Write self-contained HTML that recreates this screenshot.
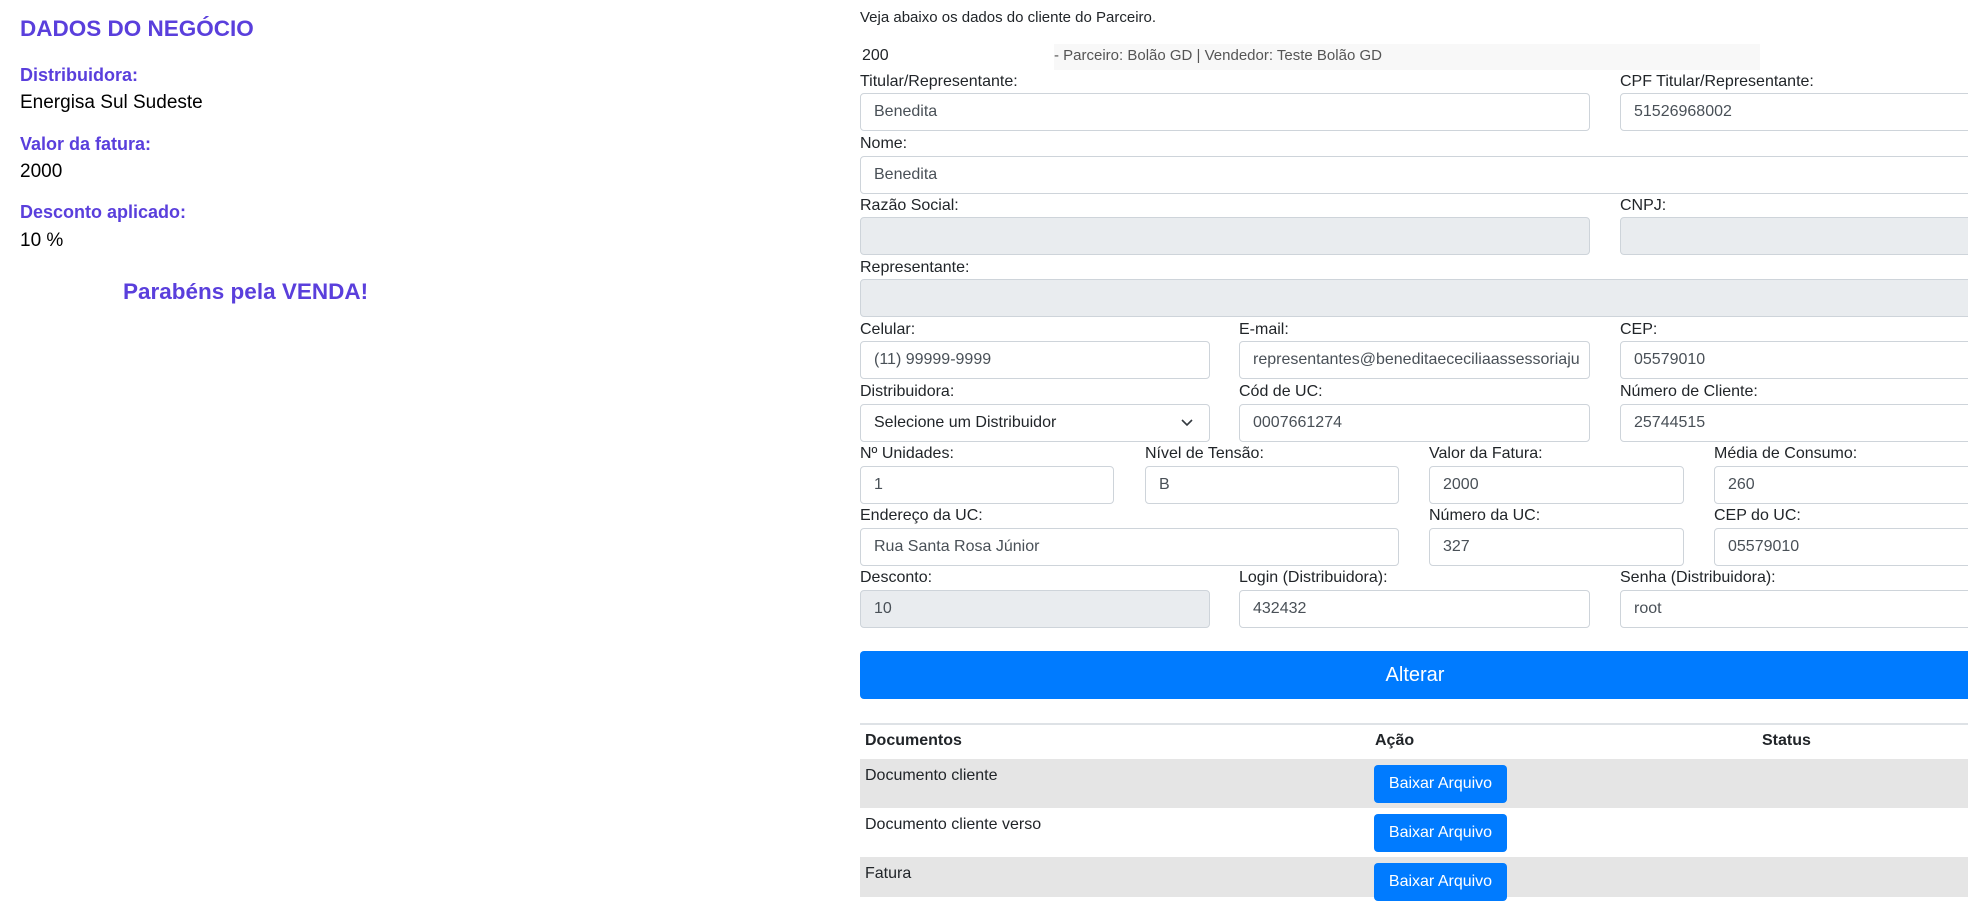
<!DOCTYPE html>
<html><head><meta charset="utf-8"><style>
*{box-sizing:border-box;margin:0;padding:0}
body{width:1968px;height:895px;overflow:hidden;background:#fff;position:relative;font-family:"Liberation Sans",Arial,sans-serif;color:#212529}
.a{position:absolute;white-space:nowrap}
.h{color:#5a3fdc;font-weight:bold}
.lb{position:absolute;font-size:16px;color:#212529;white-space:nowrap;line-height:20px}
.in{position:absolute;height:38px;border:1px solid #ced4da;border-radius:4px;background:#fff;font-size:16px;color:#495057;padding:0 13px;line-height:36px;white-space:nowrap;overflow:hidden}
.dis{background:#e9ecef}
.btn{position:absolute;background:#007bff;color:#fff;border-radius:4px;text-align:center}
</style></head><body>
<div class="a h" style="left:20px;top:16px;font-size:22.5px">DADOS DO NEGÓCIO</div>
<div class="a h" style="left:20px;top:65px;font-size:18px">Distribuidora:</div>
<div class="a" style="left:20px;top:92px;font-size:19px;color:#000">Energisa Sul Sudeste</div>
<div class="a h" style="left:20px;top:134px;font-size:18px">Valor da fatura:</div>
<div class="a" style="left:20px;top:161px;font-size:19px;color:#000">2000</div>
<div class="a h" style="left:20px;top:202px;font-size:18px">Desconto aplicado:</div>
<div class="a" style="left:20px;top:230px;font-size:19px;color:#000">10 %</div>
<div class="a h" style="left:123px;top:279px;font-size:22.5px">Parabéns pela VENDA!</div>

<div class="lb" style="left:860px;top:8px;font-size:15px">Veja abaixo os dados do cliente do Parceiro.</div>
<div class="a" style="left:1054px;top:44px;width:706px;height:26px;background:#f8f8f8"></div>
<div class="lb" style="left:862px;top:46px">200</div>
<div class="lb" style="left:1054px;top:46px;font-size:15px;color:#555">- Parceiro: Bolão GD | Vendedor: Teste Bolão GD</div>

<div class="lb" style="left:860px;top:72px">Titular/Representante:</div>
<div class="in" style="left:860px;top:93px;width:730px">Benedita</div>
<div class="lb" style="left:1620px;top:72px">CPF Titular/Representante:</div>
<div class="in" style="left:1620px;top:93px;width:400px">51526968002</div>

<div class="lb" style="left:860px;top:134px">Nome:</div>
<div class="in" style="left:860px;top:156px;width:1160px">Benedita</div>

<div class="lb" style="left:860px;top:196px">Razão Social:</div>
<div class="in dis" style="left:860px;top:217px;width:730px"></div>
<div class="lb" style="left:1620px;top:196px">CNPJ:</div>
<div class="in dis" style="left:1620px;top:217px;width:400px"></div>

<div class="lb" style="left:860px;top:258px">Representante:</div>
<div class="in dis" style="left:860px;top:279px;width:1160px"></div>

<div class="lb" style="left:860px;top:320px">Celular:</div>
<div class="in" style="left:860px;top:341px;width:350px">(11) 99999-9999</div>
<div class="lb" style="left:1239px;top:320px">E-mail:</div>
<div class="in" style="left:1239px;top:341px;width:351px">representantes@beneditaececiliaassessoriaju</div>
<div class="lb" style="left:1620px;top:320px">CEP:</div>
<div class="in" style="left:1620px;top:341px;width:400px">05579010</div>

<div class="lb" style="left:860px;top:382px">Distribuidora:</div>
<div class="in" style="left:860px;top:404px;width:350px;color:#212529">Selecione um Distribuidor<svg style="position:absolute;right:16px;top:14px" width="12" height="8" viewBox="0 0 12 8"><path d="M1 1l5 5 5-5" fill="none" stroke="#343a40" stroke-width="1.6"/></svg></div>
<div class="lb" style="left:1239px;top:382px">Cód de UC:</div>
<div class="in" style="left:1239px;top:404px;width:351px">0007661274</div>
<div class="lb" style="left:1620px;top:382px">Número de Cliente:</div>
<div class="in" style="left:1620px;top:404px;width:400px">25744515</div>

<div class="lb" style="left:860px;top:444px">Nº Unidades:</div>
<div class="in" style="left:860px;top:466px;width:254px">1</div>
<div class="lb" style="left:1145px;top:444px">Nível de Tensão:</div>
<div class="in" style="left:1145px;top:466px;width:254px">B</div>
<div class="lb" style="left:1429px;top:444px">Valor da Fatura:</div>
<div class="in" style="left:1429px;top:466px;width:255px">2000</div>
<div class="lb" style="left:1714px;top:444px">Média de Consumo:</div>
<div class="in" style="left:1714px;top:466px;width:300px">260</div>

<div class="lb" style="left:860px;top:506px">Endereço da UC:</div>
<div class="in" style="left:860px;top:528px;width:539px">Rua Santa Rosa Júnior</div>
<div class="lb" style="left:1429px;top:506px">Número da UC:</div>
<div class="in" style="left:1429px;top:528px;width:255px">327</div>
<div class="lb" style="left:1714px;top:506px">CEP do UC:</div>
<div class="in" style="left:1714px;top:528px;width:300px">05579010</div>

<div class="lb" style="left:860px;top:568px">Desconto:</div>
<div class="in dis" style="left:860px;top:590px;width:350px">10</div>
<div class="lb" style="left:1239px;top:568px">Login (Distribuidora):</div>
<div class="in" style="left:1239px;top:590px;width:351px">432432</div>
<div class="lb" style="left:1620px;top:568px">Senha (Distribuidora):</div>
<div class="in" style="left:1620px;top:590px;width:400px">root</div>

<div class="btn" style="left:860px;top:651px;width:1150px;height:48px;line-height:48px;font-size:20px;padding-right:40px">Alterar</div>

<div class="a" style="left:860px;top:723px;width:1110px;height:2px;background:#dee2e6"></div>
<div class="lb" style="left:865px;top:731px;font-weight:bold">Documentos</div>
<div class="lb" style="left:1375px;top:731px;font-weight:bold">Ação</div>
<div class="lb" style="left:1762px;top:731px;font-weight:bold">Status</div>

<div class="a" style="left:860px;top:759px;width:1110px;height:49px;background:#e5e5e5"></div>
<div class="a" style="left:860px;top:857px;width:1110px;height:40px;background:#e5e5e5"></div>
<div class="lb" style="left:865px;top:766px">Documento cliente</div>
<div class="lb" style="left:865px;top:815px">Documento cliente verso</div>
<div class="lb" style="left:865px;top:864px">Fatura</div>
<div class="btn" style="left:1374px;top:765px;width:133px;height:38px;line-height:38px;font-size:16px">Baixar Arquivo</div>
<div class="btn" style="left:1374px;top:814px;width:133px;height:38px;line-height:38px;font-size:16px">Baixar Arquivo</div>
<div class="btn" style="left:1374px;top:863px;width:133px;height:38px;line-height:38px;font-size:16px">Baixar Arquivo</div>
</body></html>
